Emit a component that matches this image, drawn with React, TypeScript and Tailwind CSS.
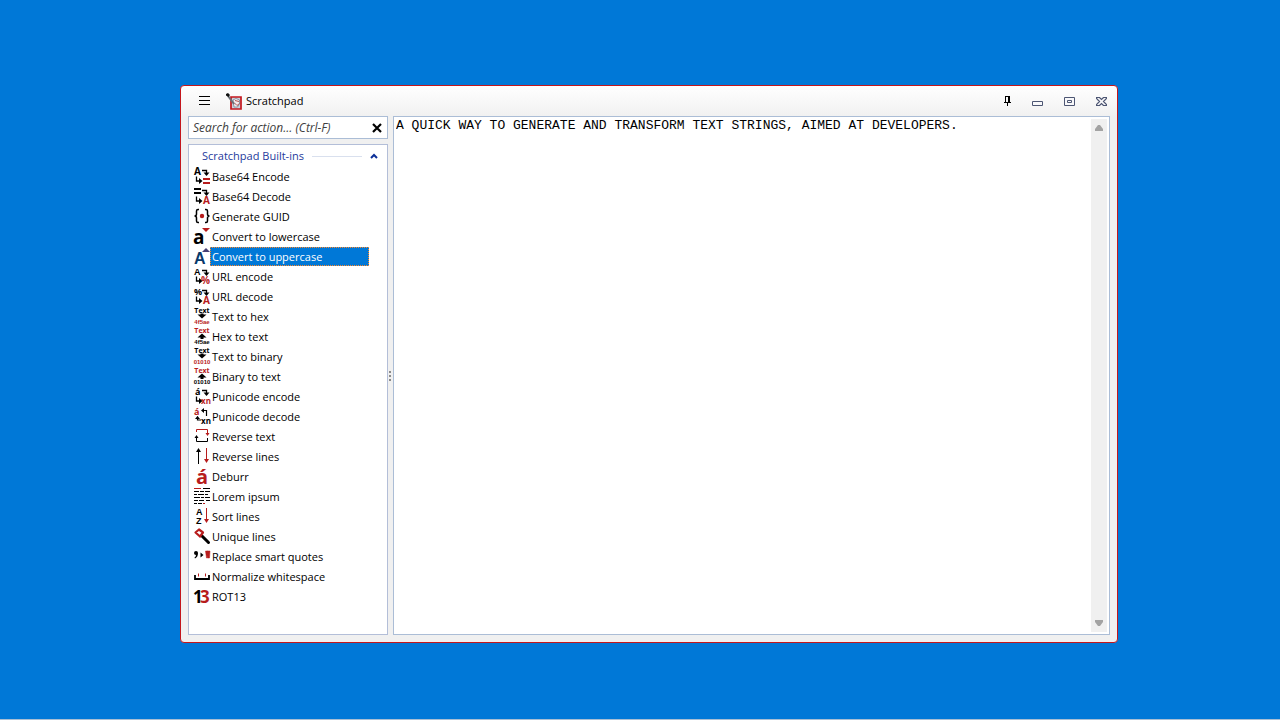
import { useState, type ReactNode } from "react";

const RED = "#b71c1c";
const INK = "#000000";

type GlyphProps = {
  x: number;
  y: number;
  size: number;
  color?: string;
  anchor?: "start" | "middle" | "end";
  compact?: boolean;
  children: string;
};

function Glyph({ x, y, size, color = INK, anchor = "start", compact = false, children }: GlyphProps) {
  return (
    <text
      x={x}
      y={y}
      fontSize={size}
      fill={color}
      textAnchor={anchor}
      fontWeight={700}
      className={compact ? "font-['Liberation_Sans',sans-serif]" : "font-['Open_Sans',sans-serif]"}
    >
      {children}
    </text>
  );
}

function ConvertArrows() {
  return (
    <g>
      <path d="M8 2.500h4.500v3" fill="none" stroke={INK} strokeWidth="1.300" />
      <path d="M9.500 4.500h6l-3 3.500z" fill={INK} />
      <path d="M2.500 8.500v4.500h3" fill="none" stroke={INK} strokeWidth="1.300" />
      <path d="M5 10v6l3.500-3z" fill={INK} />
    </g>
  );
}

function EqualsSign({ x, y, color }: { x: number; y: number; color: string }) {
  return <path d={`M${x} ${y}h7v2h-7zM${x} ${y + 4}h7v2h-7z`} fill={color} />;
}

function HexIcon({ up, code }: { up?: boolean; code: string }) {
  return (
    <g>
      <Glyph x={8} y={5} size={7} anchor="middle" color={up ? RED : INK}>Text</Glyph>
      <path d={up ? "M8 5.500l4.500 4h-3v1.500h-3v-1.500H3.500z" : "M6.500 5.500h3v1h3l-4.500 4-4.500-4h3z"} fill={INK} />
      <Glyph x={8} y={16} size={6} anchor="middle" compact color={up ? INK : RED}>{code}</Glyph>
    </g>
  );
}

type Action = { name: string; icon: ReactNode };

const actions: Action[] = [
  { name: "Base64 Encode", icon: <><Glyph x={0} y={7} size={10}>A</Glyph><ConvertArrows /><EqualsSign x={9} y={10} color={RED} /></> },
  { name: "Base64 Decode", icon: <><EqualsSign x={0} y={0} color={INK} /><ConvertArrows /><Glyph x={9} y={16} size={10} color={RED}>A</Glyph></> },
  {
    name: "Generate GUID",
    icon: (
      <>
        <path d="M5 1.500H4Q2.500 1.500 2.500 3v3Q2.500 8 .5 8q2 0 2 2v3q0 1.500 1.500 1.500h1M11 1.500h1q1.500 0 1.500 1.500v3q0 2 2 2-2 0-2 2v3q0 1.500-1.500 1.500h-1" fill="none" stroke={INK} strokeWidth="1.500" />
        <circle cx="8" cy="8" r="2.200" fill={RED} />
      </>
    ),
  },
  { name: "Convert to lowercase", icon: <><Glyph x={-1} y={16} size={19}>a</Glyph><path d="M8 0h8l-4 4z" fill={RED} /></> },
  { name: "Convert to uppercase", icon: <><Glyph x={0} y={16} size={16} compact color="#08396b">A</Glyph><path d="M8 4h8l-4-4z" fill="#454076" /></> },
  { name: "URL encode", icon: <><Glyph x={0} y={7} size={9} compact>A</Glyph><ConvertArrows /><Glyph x={7} y={16} size={10} color={RED}>%</Glyph></> },
  { name: "URL decode", icon: <><Glyph x={0} y={7} size={9}>%</Glyph><ConvertArrows /><Glyph x={9} y={16} size={10} color={RED}>A</Glyph></> },
  { name: "Text to hex", icon: <HexIcon code="4f5ae" /> },
  { name: "Hex to text", icon: <HexIcon up code="4f5ae" /> },
  { name: "Text to binary", icon: <HexIcon code="01010" /> },
  { name: "Binary to text", icon: <HexIcon up code="01010" /> },
  { name: "Punicode encode", icon: <><Glyph x={1} y={7} size={9}>á</Glyph><ConvertArrows /><Glyph x={7} y={16} size={8} color={RED}>xn</Glyph></> },
  {
    name: "Punicode decode",
    icon: (
      <>
        <Glyph x={0} y={7} size={9} color={RED}>á</Glyph>
        <path d="M12.500 8V2.500H9M3.500 8.500V12H7" fill="none" stroke={INK} strokeWidth="1.200" />
        <path d="M10 0v5L7 2.500zM1 11h5L3.500 8z" fill={INK} />
        <Glyph x={7} y={16} size={8}>xn</Glyph>
      </>
    ),
  },
  {
    name: "Reverse text",
    icon: (
      <>
        <path d="M2.500 4V1.500h11V6" fill="none" stroke={RED} />
        <path d="M11.500 5h4l-2 3z" fill={RED} />
        <path d="M2.500 9v4.500h11V10" fill="none" stroke={INK} />
        <path d="M.5 10h4l-2-3z" fill={INK} />
      </>
    ),
  },
  {
    name: "Reverse lines",
    icon: (
      <>
        <path d="M4.500 3v13" stroke={INK} />
        <path d="M2 4h5L4.500 0z" fill={INK} />
        <path d="M12.500 0v12" stroke={RED} />
        <path d="M10 11h5l-2.500 4z" fill={RED} />
      </>
    ),
  },
  { name: "Deburr", icon: <Glyph x={8} y={16} size={20} color={RED} anchor="middle">á</Glyph> },
  {
    name: "Lorem ipsum",
    icon: (
      <>
        <path d="M0 .5h7" stroke={RED} />
        <path d="M9 .5h7M0 3.500h5M6 3.500h4M11 3.500h5M0 6.500h3M4 6.500h6M11 6.500h3M0 9.500h6M7 9.500h3M11 9.500h5M0 12.500h4M5 12.500h5M12 12.500h4M0 15.500h3M4 15.500h4" stroke={INK} />
        <path d="M9 15.500h2" stroke={RED} />
      </>
    ),
  },
  {
    name: "Sort lines",
    icon: (
      <>
        <Glyph x={2} y={7} size={9} compact>A</Glyph>
        <Glyph x={2} y={16} size={9} compact>Z</Glyph>
        <path d="M12.500 0v12" stroke={RED} />
        <path d="M10 11h5l-2.500 4z" fill={RED} />
      </>
    ),
  },
  {
    name: "Unique lines",
    icon: (
      <>
        <path d="M8 8l6.500 6.500" stroke={INK} strokeWidth="3" strokeLinecap="round" />
        <path d="M1.500 4.500l3.500-3 4 3-3 4z" fill="#ffffff" stroke={RED} strokeWidth="2.200" strokeLinejoin="round" />
      </>
    ),
  },
  {
    name: "Replace smart quotes",
    icon: (
      <>
        <path d="M0 5a2 2 0 1 1 4 0Q4 9 1 10.500L.5 9.500Q2 8.500 2 7 0 7 0 5z" fill={INK} />
        <path d="M6.500 4.500v5l3-2.500z" fill={INK} />
        <path d="M11.500 3h2.500l-.3 7h-1.200zM13.500 3H16l-.5 7h-1.500z" fill={RED} stroke={RED} strokeWidth=".5" />
      </>
    ),
  },
  {
    name: "Normalize whitespace",
    icon: (
      <>
        <path d="M1 7v4h14V7" fill="none" stroke={INK} strokeWidth="1.800" />
        <path d="M4.500 5.500v3M11.500 5.500v3" stroke={RED} />
      </>
    ),
  },
  { name: "ROT13", icon: <><Glyph x={-1} y={15} size={17}>1</Glyph><Glyph x={6} y={15} size={17} color={RED}>3</Glyph></> },
];

function ScratchpadLogo() {
  return (
    <svg viewBox="0 0 16 16" className="h-4 w-4 shrink-0 overflow-visible" aria-hidden="true">
      <path d="M5 4h10v12H5z" fill="#cbd2da" stroke="#c4161c" strokeWidth="1.700" />
      <path d="M7 7l3-1.500 3.500 1.500v4l-2 3H8z" fill="#f4eeee" stroke="#65768a" strokeWidth=".7" />
      <path d="M9 7.500l4 1M8 9.500l3 3 2.500-2" fill="none" stroke="#b55353" />
      <path d="M2 3l6 8" stroke="#6b7178" strokeWidth="2" />
      <path d="M0 1l2-1 2 2-1.500 2L0 2.500z" fill="#111111" />
    </svg>
  );
}

function TitleBar() {
  return (
    <header className="flex h-[30px] shrink-0 items-center px-2">
      <button aria-label="Menu" className="flex h-6 w-8 items-center justify-center">
        <svg viewBox="0 0 12 10" className="h-[10px] w-3" aria-hidden="true">
          <path d="M0 .5h11M0 4.500h11M0 8.500h11" stroke="#000" />
        </svg>
      </button>
      <div className="ml-[5px] flex items-center gap-1">
        <ScratchpadLogo />
        <h1 className="text-[11px]">Scratchpad</h1>
      </div>
      <div className="ml-auto flex items-center">
        <button aria-label="Keep on top" className="flex h-6 w-7 items-center justify-center">
          <svg viewBox="0 0 8 10" className="h-[10px] w-2" aria-hidden="true">
            <path d="M2 0h5v6h1v1H5v3H4V7H1V6h1zM3 1v5h2V1z" fill="#000" fillRule="evenodd" />
          </svg>
        </button>
        <button aria-label="Minimize" className="flex h-6 w-8 items-center justify-center">
          <svg viewBox="0 0 11 9" className="h-[9px] w-[11px]" aria-hidden="true">
            <path d="M.5 4.500h10v4H.5z" fill="#f8f8fa" stroke="#4d5673" />
          </svg>
        </button>
        <button aria-label="Maximize" className="flex h-6 w-8 items-center justify-center">
          <svg viewBox="0 0 11 9" className="h-[9px] w-[11px]" aria-hidden="true">
            <path d="M.5 .5h10v8H.5zM3.500 3.500h4v2h-4z" fill="#f8f8fa" stroke="#4d5673" />
          </svg>
        </button>
        <button aria-label="Close" className="-mr-2 flex h-6 w-8 items-center justify-center">
          <svg viewBox="0 0 11 9" className="h-[9px] w-[11px]" aria-hidden="true">
            <path d="M.5 .5h3l2 2 2-2h3v1l-3 3 3 3v1h-3l-2-2-2 2h-3v-1l3-3-3-3z" fill="#f8f8fa" stroke="#4d5673" strokeWidth="1.200" />
          </svg>
        </button>
      </div>
    </header>
  );
}

function ActionRow({ action, selected, onSelect }: { action: Action; selected: boolean; onSelect: () => void }) {
  return (
    <li>
      <button onClick={onSelect} aria-pressed={selected} className="flex h-5 w-full items-center text-left">
        <svg viewBox="0 0 16 16" className="h-4 w-4 shrink-0 overflow-visible" aria-hidden="true">
          {action.icon}
        </svg>
        <span
          className={
            selected
              ? "h-[19px] flex-1 border border-dotted border-[#ff8728] bg-[#0078d7] pl-px leading-[17px] text-white"
              : "h-[19px] flex-1 border border-transparent pl-px leading-[17px]"
          }
        >
          {action.name}
        </span>
      </button>
    </li>
  );
}

function Sidebar() {
  const [query, setQuery] = useState("");
  const [selected, setSelected] = useState("Convert to uppercase");
  const visible = actions.filter((a) => a.name.toLowerCase().includes(query.toLowerCase()));

  return (
    <aside className="flex w-[200px] shrink-0 flex-col gap-[5px]">
      <div className="flex h-[23px] shrink-0 items-center border border-[#abbdd6] bg-white">
        <input
          type="text"
          aria-label="Search for action"
          placeholder="Search for action... (Ctrl-F)"
          value={query}
          onChange={(e) => setQuery(e.target.value)}
          className="h-full min-w-0 flex-1 pl-1 text-[12px] italic outline-none placeholder:text-[#404040]"
        />
        <button aria-label="Clear search" onClick={() => setQuery("")} className="flex h-full w-5 items-center justify-center">
          <svg viewBox="0 0 10 10" className="h-[10px] w-[10px]" aria-hidden="true">
            <path d="M1 1l8 8M9 1l-8 8" stroke="#000" strokeWidth="2.200" />
          </svg>
        </button>
      </div>
      <nav className="flex-1 border border-[#b3bed8] bg-white pt-px pr-[18px] pb-1 pl-[5px] text-[11px]">
        <button className="flex h-5 w-[187px] items-center pl-2 text-[#1e3a9c]">
          <span>Scratchpad Built-ins</span>
          <span className="ml-2 h-px flex-1 bg-[#d9e0ee]" />
          <svg viewBox="0 0 8 6" className="mr-[3px] ml-2 h-[6px] w-2" aria-hidden="true">
            <path d="M1 5l3-3 3 3" fill="none" stroke="#0c2f98" strokeWidth="2" />
          </svg>
        </button>
        <ul>
          {visible.map((action) => (
            <ActionRow key={action.name} action={action} selected={action.name === selected} onSelect={() => setSelected(action.name)} />
          ))}
        </ul>
      </nav>
    </aside>
  );
}

function Editor() {
  const [text, setText] = useState("A QUICK WAY TO GENERATE AND TRANSFORM TEXT STRINGS, AIMED AT DEVELOPERS.");
  return (
    <main className="flex min-w-0 flex-1 border border-[#abbdd6] bg-white p-0.5">
      <textarea
        aria-label="Text"
        spellCheck={false}
        value={text}
        onChange={(e) => setText(e.target.value)}
        className="min-w-0 flex-1 resize-none overflow-hidden font-['Liberation_Mono',monospace] text-[13px] leading-[13px] text-black outline-none"
      />
      <div className="flex w-4 shrink-0 flex-col justify-between bg-[#f0f0f0]">
        <button aria-label="Scroll up" className="flex h-[18px] items-center justify-center">
          <svg viewBox="0 0 10 6" className="h-[6px] w-[10px]" aria-hidden="true"><path d="M1 6V4l3-4h2l3 4v2z" fill="#a3a3a3" /></svg>
        </button>
        <button aria-label="Scroll down" className="flex h-[18px] items-center justify-center">
          <svg viewBox="0 0 10 6" className="h-[6px] w-[10px]" aria-hidden="true"><path d="M1 0v2l3 4h2l3-4V0z" fill="#a3a3a3" /></svg>
        </button>
      </div>
    </main>
  );
}

export default function App() {
  return (
    <div className="flex min-h-screen flex-col border-b border-[#a9bfd4] bg-[#0078d7] pt-[85px] pr-[162px] pb-[76px] pl-[180px] font-['Open_Sans',sans-serif] text-[12px] text-black">
      <div className="flex flex-1 flex-col rounded-[4px] border border-[#c4161c] bg-[#f0f0f0] bg-linear-to-b from-white from-0% to-[#f0f0f0] to-[32px]">
        <TitleBar />
        <div className="flex flex-1 px-[7px] pb-[7px]">
          <Sidebar />
          <div className="flex w-[5px] shrink-0 flex-col items-start justify-center gap-[2px] pl-px" role="separator" aria-orientation="vertical">
            <span className="h-[2px] w-[2px] bg-[#8b8b8b]" />
            <span className="h-[2px] w-[2px] bg-[#8b8b8b]" />
            <span className="h-[2px] w-[2px] bg-[#8b8b8b]" />
          </div>
          <Editor />
        </div>
      </div>
    </div>
  );
}
